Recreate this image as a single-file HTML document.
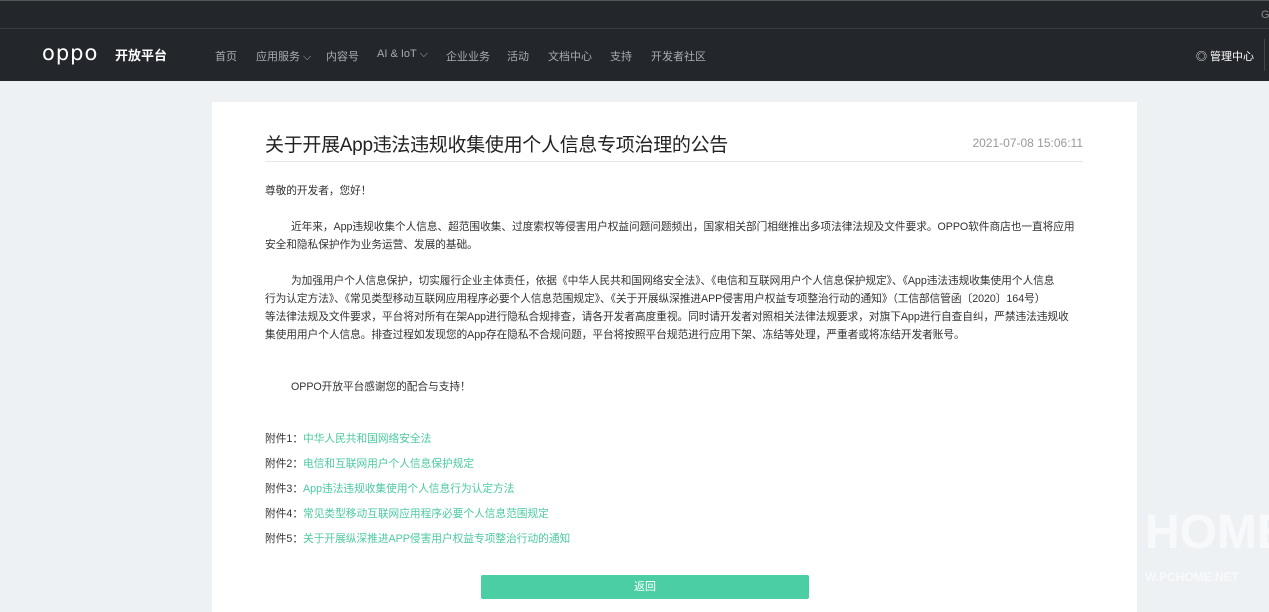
<!DOCTYPE html>
<html><head><meta charset="utf-8"><style>
*{margin:0;padding:0;box-sizing:border-box}
body{width:1269px;height:606px;overflow:hidden;background:#eef1f4;font-family:"Liberation Sans","Noto Sans CJK SC",sans-serif;color:#333;position:relative}
.top{position:absolute;left:0;top:0;width:1269px;height:29px;background:#23262b;border-top:1px solid #555;border-bottom:1px solid #3a3d42}
.nav{position:absolute;left:0;top:29px;width:1269px;height:52px;background:#23262b}
.nav span{position:absolute;top:19px;font-size:11px;color:#a8acb2;white-space:nowrap}
.card{position:absolute;left:212px;top:102px;width:925px;height:510px;background:#fff}
.t{position:absolute;left:265px;top:130px;font-size:19px;color:#222;white-space:nowrap;letter-spacing:-0.3px}
.d{position:absolute;right:186px;top:136px;font-size:12px;color:#999}
.hr{position:absolute;left:265px;top:161px;width:818px;height:1px;background:#e6e6e6}
.p{position:absolute;left:265px;font-size:10.7px;line-height:18px;color:#333;white-space:nowrap;letter-spacing:-0.05px}
.a{position:absolute;left:265px;font-size:10.7px;white-space:nowrap;color:#333}
.a b{font-weight:normal;color:#4cc9a2}
.btn{position:absolute;left:481px;top:575px;width:328px;height:24px;background:#4ccea5;border-radius:2px;color:#fff;font-size:11px;text-align:center;line-height:24px}
</style></head><body>
<div class="top"><span style="position:absolute;left:1261px;top:8px;font-size:11px;color:#888">G</span></div>
<div class="nav">
<span style="left:42px;top:12px;font-size:21px;color:#fff;letter-spacing:1px;font-family:'DejaVu Sans',sans-serif">oppo</span>
<span style="left:115px;top:16px;font-size:13px;color:#fff;font-weight:bold">开放平台</span>
<span style="left:215px">首页</span>
<span style="left:256px">应用服务 ⌵</span>
<span style="left:326px">内容号</span>
<span style="left:377px">AI &amp; IoT ⌵</span>
<span style="left:446px">企业业务</span>
<span style="left:507px">活动</span>
<span style="left:548px">文档中心</span>
<span style="left:610px">支持</span>
<span style="left:651px">开发者社区</span>
<span style="left:1196px;color:#fff">◎ 管理中心</span>
<div style="position:absolute;left:1264px;top:10px;width:1px;height:32px;background:#444"></div>
</div>
<div class="card"></div>
<div class="t">关于开展App违法违规收集使用个人信息专项治理的公告</div>
<div class="d">2021-07-08 15:06:11</div>
<div class="hr"></div>
<div class="p" style="top:182px">尊敬的开发者，您好！</div>
<div class="p" style="top:218px"><span style="padding-left:26px"></span>近年来，App违规收集个人信息、超范围收集、过度索权等侵害用户权益问题问题频出，国家相关部门相继推出多项法律法规及文件要求。OPPO软件商店也一直将应用<br>安全和隐私保护作为业务运营、发展的基础。</div>
<div class="p" style="top:272px"><span style="padding-left:26px"></span>为加强用户个人信息保护，切实履行企业主体责任，依据《中华人民共和国网络安全法》、《电信和互联网用户个人信息保护规定》、《App违法违规收集使用个人信息<br>行为认定方法》、《常见类型移动互联网应用程序必要个人信息范围规定》、《关于开展纵深推进APP侵害用户权益专项整治行动的通知》（工信部信管函〔2020〕164号）<br>等法律法规及文件要求，平台将对所有在架App进行隐私合规排查，请各开发者高度重视。同时请开发者对照相关法律法规要求，对旗下App进行自查自纠，严禁违法违规收<br>集使用用户个人信息。排查过程如发现您的App存在隐私不合规问题，平台将按照平台规范进行应用下架、冻结等处理，严重者或将冻结开发者账号。</div>
<div class="p" style="top:378px"><span style="padding-left:26px"></span>OPPO开放平台感谢您的配合与支持！</div>
<div class="a" style="top:431px">附件1：<b>中华人民共和国网络安全法</b></div>
<div class="a" style="top:456px">附件2：<b>电信和互联网用户个人信息保护规定</b></div>
<div class="a" style="top:481px">附件3：<b>App违法违规收集使用个人信息行为认定方法</b></div>
<div class="a" style="top:506px">附件4：<b>常见类型移动互联网应用程序必要个人信息范围规定</b></div>
<div class="a" style="top:531px">附件5：<b>关于开展纵深推进APP侵害用户权益专项整治行动的通知</b></div>
<div class="btn">返回</div>
<div style="position:absolute;left:1145px;top:505px;font-size:48px;font-weight:bold;color:rgba(255,255,255,0.55)">HOME</div>
<div style="position:absolute;left:1145px;top:570px;font-size:12px;font-weight:bold;color:rgba(255,255,255,0.6)">W.PCHOME.NET</div>
</body></html>
